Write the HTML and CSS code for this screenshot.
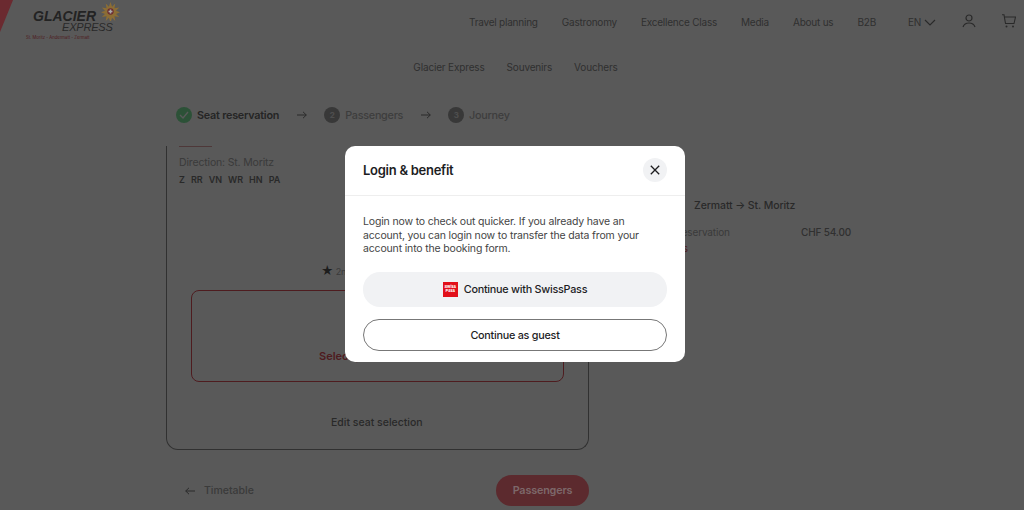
FILE: index.html
```html
<!DOCTYPE html>
<html lang="en">
<head>
    <meta charset="UTF-8">
    <meta name="viewport" content="width=device-width, initial-scale=1.0">
    <title>Glacier Express - Seat reservation</title>
    <link rel="stylesheet" href="styles.css">
</head>
<body>
    <header class="topbar">
        <div class="wedge"></div>
        <a class="logo" href="#">
            <span class="logo-glacier">GLACIER</span>
            <span class="logo-express">EXPRESS</span>
            <span class="logo-tag">St. Moritz - Andermatt - Zermatt</span>
            <svg class="logo-star" viewBox="0 0 24 24">
                <path fill="#8c6d35" d="M12 0l2 6 4-4-1 6 6-1-4 4 5 2-5 2 4 4-6-1 1 6-4-4-2 6-2-6-4 4 1-6-6 1 4-4-5-2 5-2-4-4 6 1-1-6 4 4z"/>
                <circle cx="12" cy="12" r="4" fill="#6b2a30"/>
                <path fill="#a8a8a8" d="M11 9.500h2V11h1.500v2H13v1.500h-2V13H9.500v-2H11z"/>
            </svg>
        </a>
        <nav class="mainnav">
            <a href="#">Travel planning</a>
            <a href="#">Gastronomy</a>
            <a href="#">Excellence Class</a>
            <a href="#">Media</a>
            <a href="#">About us</a>
            <a href="#">B2B</a>
        </nav>
        <div class="lang">EN
            <svg width="12" height="7" viewBox="0 0 12 7"><path d="M1 1l5 5 5-5" fill="none" stroke="#777" stroke-width="1.200"/></svg>
        </div>
        <svg class="user-icon" width="14" height="14" viewBox="0 0 14 14">
            <circle cx="7" cy="4" r="3" fill="none" stroke="#777" stroke-width="1.200"/>
            <path d="M1 13c1-3 3-4 6-4s5 1 6 4" fill="none" stroke="#777" stroke-width="1.200"/>
        </svg>
        <svg class="cart-icon" width="14" height="14" viewBox="0 0 14 14">
            <path d="M0 .8h2l1.500 8.700h8.500L13.500 3H2.500" fill="none" stroke="#777" stroke-width="1.100"/>
            <circle cx="4.500" cy="12.500" r="1" fill="#777"/>
            <circle cx="11" cy="12.500" r="1" fill="#777"/>
        </svg>
    </header>

    <nav class="subnav">
        <a href="#">Glacier Express</a>
        <a href="#">Souvenirs</a>
        <a href="#">Vouchers</a>
    </nav>

    <div class="steps">
        <span class="step-num done">
            <svg width="10" height="8" viewBox="0 0 10 8"><path d="M1 4l3 3 5-6" fill="none" stroke="#fff" stroke-width="1.300"/></svg>
        </span>
        <span class="step-label active">Seat reservation</span>
        <svg class="step-arrow" width="10" height="8" viewBox="0 0 10 8"><path d="M0 4h9.300M6 .8L9.300 4 6 7.200" fill="none" stroke="#777" stroke-width="1"/></svg>
        <span class="step-num">2</span>
        <span class="step-label">Passengers</span>
        <svg class="step-arrow" width="10" height="8" viewBox="0 0 10 8"><path d="M0 4h9.300M6 .8L9.300 4 6 7.200" fill="none" stroke="#777" stroke-width="1"/></svg>
        <span class="step-num">3</span>
        <span class="step-label">Journey</span>
    </div>

    <main class="content">
        <section class="left">
            <div class="card">
                <div class="red-dash"></div>
                <p class="direction">Direction: St. Moritz</p>
                <p class="stops"><span>Z</span><span>RR</span><span>VN</span><span>WR</span><span>HN</span><span>PA</span></p>
                <p class="class-line"><span class="star">&#9733;</span> 2nd class</p>
                <div class="seat-box">Select your seats now</div>
                <a class="edit-link" href="#">Edit seat selection</a>
            </div>
            <div class="actions">
                <a class="back" href="#">
                    <svg width="10" height="8" viewBox="0 0 10 8"><path d="M10 4H.7M4 .8L.7 4 4 7.200" fill="none" stroke="#777" stroke-width="1"/></svg>
                    Timetable
                </a>
                <button class="next-btn">Passengers</button>
            </div>
        </section>
        <aside class="summary">
            <div class="route">Zermatt &rarr; St. Moritz</div>
            <div class="price-row"><span>Seat reservation</span><span class="price">CHF 54.00</span></div>
            <a class="details" href="#">Details</a>
        </aside>
    </main>

    <div class="overlay">
        <div class="modal">
            <div class="modal-head">
                <h2>Login &amp; benefit</h2>
                <button class="close-btn" aria-label="Close">
                    <svg width="10" height="10" viewBox="0 0 10 10"><path d="M.8.8l8.400 8.400M9.200.8L.8 9.200" stroke="#1d1d1f" stroke-width="1.300"/></svg>
                </button>
            </div>
            <div class="modal-body">
                <p>Login now to check out quicker. If you already have an account, you can login now to transfer the data from your account into the booking form.</p>
                <button class="btn-swiss">
                    <span class="swiss-logo">Swiss<br>Pass</span>
                    Continue with SwissPass
                </button>
                <button class="btn-guest">Continue as guest</button>
            </div>
        </div>
    </div>
</body>
</html>
```

FILE: styles.css
```css
* {
    box-sizing: border-box;
}

body {
    font-family: Inter, "Noto Sans", sans-serif;
    margin: 0;
    height: 510px;
    overflow: hidden;
    background-color: #fff;
    color: #8a8a8a;
    font-size: 10.500px;
    letter-spacing: -0.160px;
}

a {
    color: inherit;
    text-decoration: none;
    white-space: nowrap;
}

p {
    margin: 0;
}

/* Header */
.topbar {
    display: flex;
    align-items: center;
    height: 44px;
    position: relative;
}

/* wedge, star and next button sit above the scrim so they keep their colour */
.wedge {
    position: absolute;
    z-index: 2;
    left: 0;
    top: 0;
    width: 13px;
    height: 32px;
    background-color: #6b2a30;
    clip-path: polygon(0 0, 100% 0, 0 100%);
}

.logo {
    position: relative;
    display: block;
    width: 120px;
    height: 44px;
    flex: none;
}

.logo-glacier {
    position: absolute;
    left: 33px;
    top: 11px;
    font-family: "Liberation Sans", sans-serif;
    font-weight: 700;
    font-style: italic;
    font-size: 14px;
    line-height: 11px;
    letter-spacing: 0;
    color: #666;
}

.logo-express {
    position: absolute;
    left: 62px;
    top: 22px;
    font-family: "Liberation Sans", sans-serif;
    font-style: italic;
    font-size: 11px;
    line-height: 11px;
    letter-spacing: -0.200px;
    color: #777;
}

.logo-tag {
    position: absolute;
    left: 26px;
    top: 35px;
    font-size: 4.200px;
    letter-spacing: 0;
    white-space: nowrap;
    color: #e0505a;
}

.logo-star {
    position: absolute;
    z-index: 2;
    left: 101px;
    top: 2px;
    width: 19px;
    height: 19px;
}

.mainnav {
    display: flex;
    gap: 24px;
    margin-left: 349px;
    font-size: 10px;
    letter-spacing: -0.220px;
}

.lang {
    display: flex;
    align-items: center;
    gap: 3px;
    margin-left: 32px;
    font-size: 10px;
}

.lang svg {
    margin-top: 1px;
}

.user-icon {
    margin: -3px 0 0 26px;
}

.cart-icon {
    margin: -3px 0 0 26px;
}

.subnav {
    display: flex;
    justify-content: center;
    gap: 22px;
    margin-top: 16px;
    padding-left: 7px;
    height: 14px;
    line-height: 14px;
    font-size: 10px;
}

/* Stepper */
.steps {
    display: flex;
    align-items: center;
    margin: 32px 0 0 176px;
    height: 18px;
    font-size: 10.800px;
    letter-spacing: -0.260px;
    font-weight: 500;
}

.step-num {
    display: flex;
    align-items: center;
    justify-content: center;
    width: 16px;
    height: 16px;
    margin-right: 5px;
    border-radius: 50%;
    background-color: #a0a0a0;
    color: #e0e0e0;
    font-size: 8px;
    font-weight: 700;
}

.step-num.done {
    background-color: #7fe89f;
}

.step-label {
    color: #b0b0b0;
}

.step-label.active {
    color: #6a6a6a;
    font-weight: 600;
    letter-spacing: -0.220px;
}

.step-arrow {
    margin: 0 17px 0 18px;
}

/* Page content */
.content {
    display: flex;
    margin: 22px 0 0 166px;
}

.left {
    width: 423px;
}

.card {
    position: relative;
    height: 304px;
    padding: 0 25px 0 12px;
    border: 1px solid #8c8c8c;
    border-top: none;
    border-radius: 0 0 12px 12px;
}

.red-dash {
    width: 33px;
    border-top: 1px solid #e0a0a4;
}

.direction {
    margin-top: 9px;
    color: #a8a8a8;
}

.stops {
    display: flex;
    gap: 6px;
    margin-top: 5px;
    font-size: 9px;
    font-weight: 600;
    letter-spacing: 0;
    color: #777;
}

.class-line {
    margin-top: 78px;
    padding-left: 142px;
    font-size: 9px;
    color: #a8a8a8;
}

.star {
    font-size: 12px;
    color: #555;
}

.seat-box {
    display: flex;
    align-items: flex-end;
    justify-content: center;
    width: 373px;
    height: 92px;
    margin: 12px 0 0 12px;
    padding-bottom: 18px;
    border: 1px solid #e0505a;
    border-radius: 8px;
    color: #e0505a;
    font-size: 11px;
    letter-spacing: 0;
    font-weight: 600;
}

.edit-link {
    display: block;
    margin-top: 34px;
    padding-left: 152px;
    font-weight: 500;
    letter-spacing: 0;
    color: #777;
}

.actions {
    display: flex;
    align-items: center;
    justify-content: space-between;
    margin-top: 25px;
    padding-left: 19px;
}

.back {
    display: flex;
    align-items: center;
    gap: 9px;
    font-weight: 500;
    letter-spacing: 0;
    color: #a8a8a8;
}

.next-btn {
    position: relative;
    z-index: 2;
    width: 93px;
    height: 31px;
    border: none;
    border-radius: 16px;
    background-color: #5c2a2e;
    color: #7d686a;
    font-family: inherit;
    font-size: 10.800px;
    letter-spacing: -0.160px;
    font-weight: 600;
}

.summary {
    width: 215px;
    margin: 53px 0 0 47px;
}

.route {
    padding-left: 58px;
    font-size: 10.500px;
    font-weight: 500;
    letter-spacing: -0.100px;
    color: #777;
}

.price-row {
    display: flex;
    justify-content: space-between;
    margin-top: 14px;
    padding-left: 19px;
    font-size: 10px;
    color: #a8a8a8;
}

.price {
    font-size: 10px;
    font-weight: 500;
    color: #8a8a8a;
}

.details {
    display: block;
    margin-top: 4px;
    padding-left: 21px;
    font-size: 10px;
    color: #e0505a;
}

/* Login modal */
.overlay {
    position: fixed;
    top: 0;
    left: 0;
    right: 0;
    bottom: 0;
    background-color: rgba(0, 0, 0, 0.65);
}

.modal {
    position: absolute;
    left: 345px;
    top: 146px;
    width: 340px;
    height: 216px;
    border-radius: 10px;
    background-color: #fff;
    color: #1d1d1f;
}

.modal-head {
    display: flex;
    align-items: center;
    justify-content: space-between;
    height: 50px;
    padding: 0 18px;
    border-bottom: 1px solid #eee;
}

.modal-head h2 {
    margin: 0 0 2px;
    font-size: 13px;
    letter-spacing: -0.270px;
    font-weight: 600;
}

.close-btn {
    display: flex;
    align-items: center;
    justify-content: center;
    width: 24px;
    height: 24px;
    margin-bottom: 1px;
    padding: 0;
    border: none;
    border-radius: 50%;
    background-color: #f1f2f4;
}

.modal-body {
    padding: 19px 18px 0;
}

.modal-body p {
    font-size: 10.500px;
    line-height: 13.500px;
    color: #444;
}

.btn-swiss,
.btn-guest {
    display: flex;
    align-items: center;
    justify-content: center;
    width: 100%;
    border-radius: 17px;
    font-family: inherit;
    font-size: 10.800px;
    letter-spacing: -0.250px;
    font-weight: 500;
    color: #1d1d1f;
}

.btn-swiss {
    gap: 6px;
    height: 35px;
    margin-top: 16px;
    border: none;
    background-color: #f1f2f4;
}

.btn-guest {
    height: 32px;
    margin-top: 12px;
    padding-top: 2px;
    border: 1px solid #777;
    background-color: #fff;
}

.swiss-logo {
    width: 15px;
    height: 15px;
    padding-top: 3px;
    background-color: #e2101a;
    color: #fff;
    font-size: 4px;
    letter-spacing: 0;
    font-weight: 700;
    line-height: 4.500px;
    text-align: center;
}
```
